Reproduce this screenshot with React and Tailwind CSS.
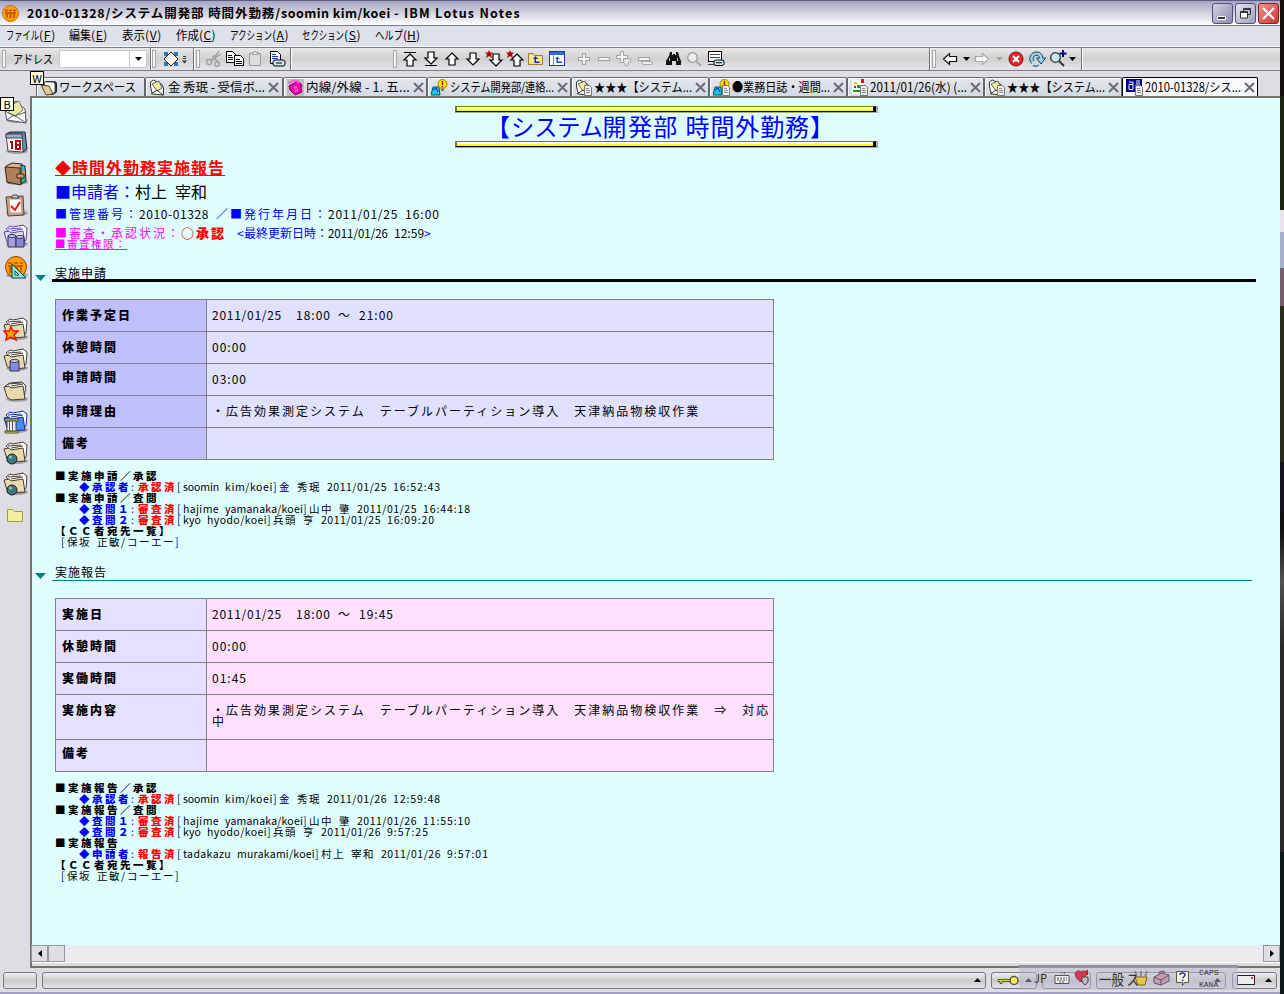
import React, { useLayoutEffect, useRef } from 'react';

const CJK = /[\u2190-\u9fff\uff00-\uffef]+/g;

/* Makes its text exactly w wide: condenses text that is too long, spaces out text that is too short. */
function Fit({ w, children, className = '' }) {
  const ref = useRef(null);
  useLayoutEffect(() => {
    const el = ref.current;
    el.style.letterSpacing = '0px';
    el.style.transform = 'none';
    el.style.marginRight = '0px';
    const nat = el.getBoundingClientRect().width;
    const n = Array.from(el.textContent).length;
    const gap = (w - nat) / n;
    if (gap < -0.25) {
      el.style.transform = `scaleX(${w / nat})`;
      el.style.marginRight = w - nat + 'px';
    } else {
      el.style.letterSpacing = gap + 'px';
    }
  }, [w, children]);
  return <span ref={ref} className={'inline-block shrink-0 origin-left whitespace-pre ' + className}>{children}</span>;
}

/* Fixed-pitch text: class of the full-width characters, class of the half-width ones, half-width pitch. */
const PITCH = {
  p17: ['text-[16px] tracking-[1px]', 'text-[15px]', 8.5],
  p16: ['text-[16px]', 'text-[15px]', 8],
  p15: ['text-[13px] tracking-[2px]', 'text-[13px]', 7.5],
  p14: ['text-[12px] tracking-[2px]', 'text-[12px]', 7],
  p13: ['text-[12px] tracking-[1px]', 'text-[12px]', 6.5],
  p12: ['text-[12px]', 'text-[12px]', 6],
  s13: ['text-[10.5px] tracking-[2.5px]', 'text-[10px]', 6.5],
  s12: ['text-[10.5px] tracking-[1.5px]', 'text-[10.5px]', 6],
};

function Mono({ p, children, className = '' }) {
  const [wide, half, pitch] = PITCH[p];
  const parts = [];
  let last = 0;
  const addHalf = (s) => s.split(/(\s+)/).filter(Boolean).forEach((t) => parts.push([true, t]));
  for (const m of children.matchAll(CJK)) {
    if (m.index > last) addHalf(children.slice(last, m.index));
    parts.push([false, m[0]]);
    last = m.index + m[0].length;
  }
  if (last < children.length) addHalf(children.slice(last));
  return (
    <span className={'whitespace-pre ' + wide + ' ' + className}>
      {parts.map(([isHalf, t], i) => (isHalf
        ? <Fit key={i} w={t.length * pitch} className={half}>{t}</Fit>
        : <span key={i}>{t}</span>))}
    </span>
  );
}

const Svg = ({ w, h, children, className = '' }) => (
  <svg width={w} height={h} viewBox={`0 0 ${w} ${h}`} className={'shrink-0 ' + className}>{children}</svg>
);

const Grip = () => <span className="h-[18px] w-[4px] shrink-0 border border-[#a8a8a8] bg-[#f4f4f4]" />;
const Sep = () => <span className="h-full w-[2px] shrink-0 border-l border-[#70707a] bg-white" />;
const Caret = ({ c = '#000' }) => <Svg w={7} h={4}><path d="M0 0h7L3.500 4z" fill={c} /></Svg>;

/* ---------- toolbar icons ---------- */
const UP = 'M8 2l6 6h-3v6H5V8H2z';
const DOWN = 'M8 14l6-6h-3V2H5v6H2z';
const Arrow = ({ d, top, bottom, star }) => (
  <Svg w={18} h={18}>
    <g transform={star ? 'translate(3 2)' : top ? 'translate(1 2)' : bottom ? 'translate(1 0)' : 'translate(1 1)'}>
      <path d={d} fill="#fff" stroke="#000" strokeWidth="1.200" />
    </g>
    {top && <path d="M3 2.500h12" stroke="#000" />}
    {bottom && <path d="M3 15.500h12" stroke="#000" />}
    {star && <path d="M4 0l1 2.500h3L6 4.500 7 8 4 6 1 8l1-3.500L0 2.500h3z" fill="#b00000" />}
  </Svg>
);
const Plus = ({ minus, dbl }) => (
  <Svg w={18} h={18}>
    {dbl && (minus
      ? <path d="M6 11.500h11v3H8z" fill="#eee" stroke="#aaa" />
      : <path d="M12 6v3h4v3h-3v4h-3v-3" fill="#eee" stroke="#aaa" />)}
    {minus
      ? <rect x="3.500" y="7.500" width="11" height="3" fill="#f2f2f2" stroke="#a0a0a0" />
      : <path d="M7.500 3.500h3v4h4v3h-4v4h-3v-4h-4v-3h4z" transform={dbl ? 'translate(-2 -2)' : undefined} fill="#f2f2f2" stroke="#a0a0a0" />}
  </Svg>
);
const Diamond = () => (
  <Svg w={16} h={16}><path d="M1 1h4v4H1zM11 1h4v4h-4zM1 11h4v4H1zM11 11h4v4h-4z" fill="#2878c8" /><path d="M8 1L15 8 8 15 1 8z" fill="#fffbe6" stroke="#222" /></Svg>
);
const Scissors = () => (
  <Svg w={18} h={18}><g fill="none" stroke="#a0a0a0" strokeWidth="1.400"><path d="M14 1L7 11M9 5l-1 2 6 6M16 4L6 10" /><circle cx="4" cy="12" r="2.500" /><circle cx="12" cy="14" r="2.300" /></g></Svg>
);
const Copy = () => (
  <Svg w={18} h={18}><g fill="#fff" stroke="#000"><path d="M.5 1.500h6l3 3v8h-9z" /><path d="M8.500 5.500h6l3 3v7h-9z" /></g><path d="M2 5.500h4M2 7.500h5M2 9.500h5M10 9.500h4M10 11.500h6M10 13.500h6" stroke="#000" /></Svg>
);
const Paste = () => (
  <Svg w={16} h={18}><path d="M2.500 3.500h11v12h-11z" fill="#ddd" stroke="#999" /><path d="M5 4.500v-2h2c0-2 2-2 2 0h2v2z" fill="#eee" stroke="#999" /></Svg>
);
const DocLink = () => (
  <Svg w={18} h={18}><path d="M2.500 1.500h7l3 3v9h-10z" fill="#fff" stroke="#000" /><path d="M4 4.500h4M4 6.500h6M4 8.500h6" stroke="#1040d0" /><rect x="5" y="10" width="12" height="6" rx="2" fill="#cfe4f4" stroke="#000" /><path d="M8 13h6" stroke="#000" /></Svg>
);
const FolderUp = () => (
  <Svg w={18} h={18}><path d="M1.500 3.500h5l1 2h8v9h-14z" fill="#f8e490" stroke="#a08020" /><path d="M6 9l2.500-3L11 9H9v2.500h3.500V13H7.500V9z" fill="#0030c0" /></Svg>
);
const WindowUp = () => (
  <Svg w={18} h={18}><rect x="1.500" y="1.500" width="15" height="14" fill="#fff" stroke="#203890" /><rect x="2" y="2" width="14" height="3" fill="#3070d0" /><path d="M5.500 5v10" stroke="#8090b0" /><path d="M7 9l2.500-2.500L12 9h-2v2.500h4V13H8.500V9z" fill="#1050c0" /></Svg>
);
const Binoculars = () => (
  <Svg w={18} h={18}><path d="M5 2h2v3h1V4h2v1h1V2h2l1 4 2 5v4h-5v-4H7v4H1v-4l3-5z" fill="#111" /><path d="M4.500 8v3M12.500 8v3" stroke="#bbb" /></Svg>
);
const Lens = ({ on }) => (
  <Svg w={18} h={18}>
    <circle cx="6.500" cy="7.500" r="4.800" fill={on ? '#c4f0f4' : '#eee'} stroke={on ? '#333' : '#999'} strokeWidth="1.300" />
    <path d="M10 11l5 5" stroke={on ? '#333' : '#aaa'} strokeWidth="2" />
    {on && <path d="M14 0v7M10.500 3.500h7" stroke="#000090" strokeWidth="2" />}
  </Svg>
);
const FormLink = () => (
  <Svg w={18} h={18}><rect x="1.500" y="1.500" width="13" height="10" fill="#fff" stroke="#000" /><path d="M3 4.500h10M3 7.500h10M1 14.500h6" stroke="#444" /><rect x="7" y="10" width="10" height="5.500" rx="2" fill="#cfe4f4" stroke="#000" /><path d="M9 12.700h6" stroke="#000" /></Svg>
);
const Back = ({ flip, c }) => (
  <Svg w={16} h={16}><path d="M1.500 8l6-5.500v3h7v5h-7v3z" fill="#f8f8f8" stroke={c} strokeWidth="1.200" transform={flip ? 'translate(16 0) scale(-1 1)' : undefined} /></Svg>
);
const Stop = () => (
  <Svg w={16} h={16}><circle cx="8" cy="8" r="7" fill="#e02828" stroke="#801010" /><path d="M5 5l6 6M11 5l-6 6" stroke="#fff" strokeWidth="2.200" /></Svg>
);
const Reload = () => (
  <Svg w={18} h={18}><path d="M3.500 13.500C-.5 8 3 2 8.500 2c4 0 6 2.500 6.200 6H17.500l-4.500 6-4.500-6h3C11 5.500 9.500 5 8 5.200 5 5.800 4.500 9 6 11" fill="#9ad4f0" stroke="#203850" /><path d="M5 15.500q3 1.500 6-.5" fill="none" stroke="#2070b0" strokeWidth="1.500" /></Svg>
);

/* ---------- tab icons ---------- */
const MiniDoc = () => <><path d="M9.500 6.500h5l2 2v8h-7z" fill="#eee" stroke="#777" /><path d="M11 9.500h3M11 11.500h4M11 13.500h4" stroke="#888" /></>;
const TabIcon = ({ k, doc }) => (
  <Svg w={18} h={17}>
    {k === 'folder' && <><path d="M6 2h9l2 2v9l-4 3H8z" fill="#222" /><path d="M4 3h10l1 2v8l-3 2H7z" fill="#fff" stroke="#555" /><path d="M1 6l8 1 4 8-7 1z" fill="#eac98c" stroke="#443" /></>}
    {k === 'mail' && <><path d="M1.500 8V3l3-2 8 4 2 4v7l-11-1z" fill="#fff" stroke="#333" /><path d="M3 5l7-3 3 7-5 3z" fill="#efec9a" stroke="#666" /><path d="M2 15l6-4 6 5" fill="none" stroke="#333" /></>}
    {k === 'phone' && <><rect width="17" height="17" fill="#c0c0c0" /><path d="M2 7l9-5 4 4-1 3 1 4-7 3-5-5z" fill="#f000b0" stroke="#800060" /><path d="M1 4l8-3 3 3M7 9l3-1M8 12l3-1" stroke="#ff60d8" strokeWidth="2" fill="none" /></>}
    {k === 'bulb' && <><path d="M2 8h6l1 8H0z" fill="#18c8e0" stroke="#055" /><path d="M2 11l3-2 2 4" stroke="#0020c0" fill="none" /><circle cx="11.500" cy="5" r="4.500" fill="#ffe800" stroke="#a08000" /><path d="M11.500 2v4M11.500 7v1.500" stroke="#d00" strokeWidth="1.500" /><path d="M10 10h3v2h-3z" fill="#777" /></>}
    {k === 'cal' && <><path d="M1 1h12v14H1z" fill="#fff" /><path d="M3 3h3v2H3z" fill="#f0d000" /><path d="M10 0h3v4h-3zM3 7h2v2H3z" fill="#e01010" /><path d="M2 11h7v2H2zM6 6h3v3H6z" fill="#10a020" /></>}
    {k === 'app' && <><rect width="16" height="13" fill="#000090" /><path d="M3 3h4v2M3 5.500h4v5H3zM11 1v7M13 1v5" stroke="#fff" fill="none" /></>}
    {doc && <MiniDoc />}
  </Svg>
);

const TABS = [
  { w: 109, k: 'folder', t: 'ワークスペース', tw: 77, nox: true },
  { w: 138, k: 'mail', t: '金 秀珉 - 受信ボ...', tw: 97 },
  { w: 144, k: 'phone', t: '内線/外線 - 1. 五...', tw: 104 },
  { w: 144, k: 'bulb', t: 'システム開発部/連絡...', tw: 104 },
  { w: 138, k: 'mail', doc: true, t: '★★★【システム...', tw: 98 },
  { w: 138, k: 'bulb', doc: true, t: '●業務日誌・週間...', tw: 98 },
  { w: 137, k: 'cal', doc: true, t: '2011/01/26(水) (...', tw: 97 },
  { w: 138, k: 'mail', doc: true, t: '★★★【システム...', tw: 98 },
  { w: 136, k: 'app', doc: true, t: '2010-01328/シス...', tw: 96, on: true },
];

const Tab = ({ w, k, doc, t, tw, on, nox }) => (
  <div
    className={'flex h-[19px] shrink-0 items-center rounded-t-[2px] border-t border-l border-r ' + (on ? 'border-black bg-[#f8f8fa]' : 'border-[#66666e] bg-linear-to-b from-[#e4e6ea] to-[#d2dae4] shadow-[inset_1px_1px_0_#fff]')}
    style={{ width: w }}
  >
    <span className="flex w-[22px] shrink-0 pl-[3px]"><TabIcon k={k} doc={doc} /></span>
    <Fit w={tw} className="text-[12.500px] leading-none">{t}</Fit>
    {!nox && <Svg w={11} h={11} className="ml-[3px]"><path d="M1 1l9 9M10 1l-9 9" stroke="#6c6c74" strokeWidth="2" /></Svg>}
  </div>
);

/* ---------- side bar icons ---------- */
const Folders = ({ a = '#ead9ac', s = '#443c30', plain }) => (
  <>
    {!plain && <path d="M3 5l4-3 3 1 10-2 4 3-1 12-4 4z" fill="#fff" stroke={s} />}
    {plain && <path d="M2 7l5-3 12-1 4 4-2 12z" fill="#fff" stroke={s} />}
    <path d="M5 5l13-1M8 7l12-2" stroke={s} />
    <path d="M1 8l5-1 2 2 12-2 2 13-14 1-4-3z" fill={a} stroke={s} />
  </>
);
const SideIcon = ({ k }) => (
  <Svg w={26} h={25}>
    {k !== 'small' && <ellipse cx="14" cy="20" rx="11" ry="3" fill="#a09ea8" />}
    {k === 'mail' && <><path d="M2 11L13 1l9 8 1 14-19-3z" fill="#fff" stroke="#555" /><path d="M6 6l10-5 4 9-8 6-6-3z" fill="#e8eaa0" stroke="#777" /><path d="M2 11l9 5 12-4M4 20l7-5 12 8" fill="none" stroke="#555" /></>}
    {k === 'cal' && <><path d="M3 3l4-2h15l2 17-4 3" fill="#6a88a8" stroke="#223" /><path d="M3 3h16l1 18-15-1z" fill="#fff" stroke="#445" /><path d="M3 3h16v4H3z" fill="#9ab0c8" stroke="#445" /><path d="M9 10v8M7 11h2M13 10h4v8h-4zM13 14h4" fill="none" stroke="#b00000" strokeWidth="2" /></>}
    {k === 'book' && <><path d="M3 4l6-3 10 1v18l-14 1z" fill="#d8b48c" stroke="#3a2818" /><path d="M18 3l4 1 1 15-5 3z" fill="#30b8d0" stroke="#222" /><path d="M19 9h3v4h-3z" fill="#ff9020" /><path d="M19 15h3v4h-3z" fill="#30c020" /><path d="M2 5l15 1 1 17-14-3z" fill="#b08058" stroke="#3a2818" /><path d="M14 12h7v4h-7z" fill="#c89c70" stroke="#3a2818" /></>}
    {k === 'todo' && <><path d="M3 4l17-1 1 19-16 1z" fill="#d8a070" stroke="#443" /><path d="M6 6h12l1 14H7z" fill="#fff" stroke="#a99" /><path d="M8 5l2-3h4l2 3z" fill="#ccc" stroke="#444" /><path d="M8 13l4 4 5-8" stroke="#f01010" strokeWidth="2" fill="none" /></>}
    {k === 'repl' && <><Folders a="#e0d8fa" s="#6040a8" /><path d="M5 12h8v11H5z" fill="#a0a0e0" stroke="#334" /><path d="M13 13h8v10h-8z" fill="#8888d8" stroke="#334" /><ellipse cx="9" cy="12" rx="4" ry="1.500" fill="#ccf" stroke="#334" /><ellipse cx="17" cy="13" rx="4" ry="1.500" fill="#ccf" stroke="#334" /></>}
    {k === 'notes' && <><circle cx="13" cy="12" r="10.500" fill="#ffa000" stroke="#804000" /><path d="M5 7h4v2H5zM11 7h4v2h-4zM17 7h3v2h-3zM5 10h15v2H5zM6 12h3v6H6zM12 12h3v3h-3zM17 12h2v5h-2z" fill="#d06000" /><path d="M9 9v14h14z" fill="#90e8d8" stroke="#044" /><path d="M12 16v4h4z" fill="#fff" stroke="#044" /></>}
    {['fav', 'db', 'fold', 'lib', 'globe'].includes(k) && <Folders a={k === 'lib' ? '#4888f0' : undefined} s={k === 'lib' ? '#103090' : undefined} plain={k === 'fold'} />}
    {k === 'fav' && <path d="M8 10l2 4h5l-4 4 2 5-5-3-5 3 1-5-3-4h5z" fill="#ffa000" stroke="#f01010" strokeWidth="1.500" />}
    {k === 'db' && <><path d="M7 13h9v10H7z" fill="#8888e0" stroke="#334" /><ellipse cx="11.500" cy="13" rx="4.500" ry="1.500" fill="#ccf" stroke="#334" /></>}
    {k === 'lib' && <><path d="M2 9h13v2H2zM2 21h13v2H2z" fill="#fff080" stroke="#443" /><path d="M4 11h9v10H4z" fill="#eee" stroke="#443" /><path d="M6.500 11v10M9.500 11v10" stroke="#555" /></>}
    {k === 'globe' && <><circle cx="9" cy="18" r="5" fill="#407878" stroke="#123" /><circle cx="7.500" cy="16" r="1.500" fill="#a0c8c8" /></>}
    {k === 'small' && <path d="M4.500 6.500h5l2 2h8v10h-15z" fill="#f0f0a0" stroke="#a0a040" />}
  </Svg>
);

const Bevel = () => <div className="h-[7px] w-[423px] shrink-0 border-r-2 border-b border-[#a8a8a8]"><div className="h-[6px] border-t border-r-[3px] border-b border-l-2 border-t-[#808000] border-r-black border-b-black border-l-[#808000] bg-linear-to-b from-white from-25% to-[#ffff00] to-50%" /></div>;

const MENUS = [
  [6, 50, 'ファイル', 'F'], [13, 39, '編集', 'E'], [14, 40, '表示', 'V'], [14, 40, '作成', 'C'],
  [14, 59, 'アクション', 'A'], [13, 59, 'セクション', 'S'], [14, 45, 'ヘルプ', 'H'],
];

function Table({ top, labelBg, valueBg, rows }) {
  return (
    <div className={'ml-[23px] w-[719px] border border-[#808080] ' + top}>
      {rows.map(([h, label, value, pt = 'pt-[8px]'], i) => (
        <div key={i} className={'flex ' + h + (i ? ' border-t border-[#808080]' : '')}>
          <div className={'w-[151px] shrink-0 border-r border-[#808080] pl-[6px] text-[12px] leading-[14px] ' + pt + ' ' + labelBg}>
            <Mono p="p14" className="font-black">{label}</Mono>
          </div>
          <div className={'flex grow flex-col overflow-hidden pt-[8px] pl-[5px] text-[12px] ' + valueBg}>
            {value.map((v, j) => <div key={j} className="h-[11px] leading-[14px]"><Mono p="p14">{v}</Mono></div>)}
          </div>
        </div>
      ))}
    </div>
  );
}

const Log = ({ who, no, done, id, name }) => (
  <div className="flex h-[11px] items-center pl-[47px]">
    <span className="flex w-[52px] shrink-0 text-[#0000ff]"><Mono p="s13" className="font-black">{who}</Mono></span>
    <span className="flex w-[7px] shrink-0 text-[#0000ff]"><Mono p="s12">:</Mono></span>
    <span className="flex w-[39px] shrink-0 text-[#ff0000]"><Mono p="s13" className="font-black">{done}</Mono></span>
    <Mono p="s12" className="text-[#000080]">[</Mono><Mono p="s12">{id}</Mono><Mono p="s12" className="text-[#000080]">]</Mono>
    <Mono p="s12">{name}</Mono>
  </div>
);
const Head = ({ children }) => <div className="flex h-[11px] items-center pl-[23px]"><Mono p="s13" className="font-black">{children}</Mono></div>;
const Cc = () => (
  <>
    <Head>【ＣＣ者宛先一覧】</Head>
    <div className="flex h-[11px] items-center pl-[29px]"><Mono p="s12" className="text-[#000080]">[</Mono><Mono p="s12">保坂 正敏/コーエー</Mono><Mono p="s12" className="text-[#000080]">]</Mono></div>
  </>
);
const Twisty = () => <Svg w={11} h={6}><path d="M0 0h11L5.500 6z" fill="#008080" /></Svg>;

const Panel = ({ w, children }) => (
  <div className="flex h-[17px] shrink-0 items-center justify-end rounded-[3px] border border-[#77777c] bg-linear-to-b from-[#f0f0f0] via-[#c9c9c9] to-[#e4e4f0] px-[4px]" style={{ width: w }}>{children}</div>
);
const UpCaret = () => <Svg w={7} h={4}><path d="M0 4h7L3.500 0z" fill="#000" /></Svg>;

export default function App() {
  return (
    <div className="relative flex h-[994px] w-[1284px] overflow-hidden bg-[#dedee2] font-['Noto_Sans_CJK_JP','Liberation_Sans',sans-serif] text-black">
      <div className="flex w-[1280px] shrink-0 flex-col">
        {/* title bar */}
        <div className="flex h-[26px] shrink-0 items-center border-t border-b border-t-[#5c5c80] border-b-[#78788c] bg-linear-to-b from-[#a6a6c4] via-[#d2d2e0] to-white pl-[2px]">
          <Svg w={17} h={17}><circle cx="8.500" cy="8.500" r="8" fill="#ff9c10" stroke="#d07000" /><path d="M3 5.500h3M7 5.500h3M11 5.500h3M5 8v5M8.500 8v5M12 8v5M3 8h11" stroke="#b85000" strokeWidth="1.500" fill="none" /></Svg>
          <span className="ml-[8px] flex text-[12.500px] leading-none font-bold"><Fit w={84}>2010-01328/</Fit><Fit w={170}>システム開発部 時間外勤務/</Fit><Fit w={113}>soomin kim/koei </Fit><Fit w={127}>- IBM Lotus Notes</Fit></span>
          <div className="grow" />
          <div className="flex gap-[2px] pr-[1px]">
            <span className="flex size-[21px] items-end rounded-[3px] border border-[#50507c] bg-linear-to-br from-[#d4d4e4] to-[#8c8cb0] pb-[3px] pl-[4px]"><span className="h-[4px] w-[9px] border border-white bg-[#333]" /></span>
            <span className="flex size-[21px] items-center justify-center rounded-[3px] border border-[#50507c] bg-linear-to-br from-[#e4e4f0] to-[#a0a0c0]"><Svg w={11} h={11}><path d="M3.500 3V.5h7v6H8M3.500 1.500h7" fill="none" stroke="#333" /><path d="M.5 3.500h7v6.500h-7zM.5 4.500h7" fill="#fff" stroke="#333" /></Svg></span>
            <span className="flex size-[21px] items-center justify-center rounded-[3px] border border-[#882020] bg-linear-to-br from-[#f09090] to-[#c83030]"><Svg w={13} h={13}><path d="M1 1l11 11M12 1L1 12" stroke="#fff" strokeWidth="2" /></Svg></span>
          </div>
        </div>
        {/* menu bar */}
        <div className="flex h-[21px] shrink-0 items-center border-b border-[#f8f8f8] bg-[#dee0ea] pb-[2px] text-[12px] leading-none">
          {MENUS.map(([gap, w, t, k]) => (
            <span key={k} className="flex shrink-0" style={{ marginLeft: gap, width: w }}>
              <Fit w={w - 17}>{t}</Fit><Fit w={17}>({<u>{k}</u>})</Fit>
            </span>
          ))}
        </div>
        {/* tool bar */}
        <div className="flex h-[24px] shrink-0 items-center border-t border-b border-[#7c7c84] bg-linear-to-b from-[#e8e8e8] via-[#d0d0d0] to-[#e6e6ea] pl-[2px]">
          <Grip />
          <Fit w={40} className="ml-[7px] text-[12px] leading-none">アドレス</Fit>
          <div className="ml-[6px] flex h-[18px] w-[88px] shrink-0 border border-[#c8c8cc] bg-white">
            <span className="grow" /><span className="flex w-[17px] items-center justify-center border-l border-[#c8c8cc]"><Caret /></span>
          </div>
          <span className="ml-[3px] flex h-full w-[43px] shrink-0 items-center"><Sep /><Grip /><span className="ml-[7px] flex w-[19px]"><Diamond /></span><Svg w={5} h={9}><path d="M1 1.500h3M1 3.500h3" stroke="#333" /><path d="M0 5.500h5L2.500 8.500z" fill="#333" /></Svg></span>
          <Sep />
          <span className="flex w-[95px] shrink-0 items-center pl-[1px]"><Grip /><span className="flex gap-[3px] pl-[5px]"><Scissors /><Copy /><Paste /><span className="pl-[2px]"><DocLink /></span></span></span>
          <Sep />
          <span className="w-[101px] shrink-0" />
          <Grip />
          <span className="flex w-[174px] shrink-0 gap-[3px] pl-[4px]">
            <Arrow d={UP} top /><Arrow d={DOWN} bottom /><Arrow d={UP} /><Arrow d={DOWN} /><Arrow d={DOWN} star /><Arrow d={UP} star /><FolderUp /><WindowUp />
          </span>
          <span className="flex w-[88px] shrink-0 gap-[2px] pl-[4px]"><Plus /><Plus minus /><Plus dbl /><Plus minus dbl /></span>
          <span className="flex shrink-0 gap-[3px] pl-[6px]"><Binoculars /><Lens /><FormLink /></span>
          <span className="grow" />
          <span className="flex h-full w-[351px] shrink-0 items-center"><Sep />
            <span className="flex pl-[1px]"><Grip /></span>
            <span className="flex items-center pl-[6px]"><Back c="#111" /><span className="w-[5px]" /><Caret /><span className="w-[4px]" /><Back flip c="#a8a8a8" /><span className="w-[6px]" /><Caret c="#aaa890" /><span className="w-[5px]" /><Stop /><span className="w-[4px]" /><Reload /><span className="w-[3px]" /><Lens on /><span className="w-[2px]" /><Caret /></span>
            <span className="ml-[5px] flex h-full"><Sep /></span>
          </span>
        </div>
        {/* body */}
        <div className="flex h-[897px] shrink-0">
          <div className="flex w-[30px] shrink-0 flex-col items-center bg-[#dedde3] pt-[26px]">
            {['mail', 'cal', 'book', 'todo', 'repl', 'notes', '', 'fav', 'db', 'fold', 'lib', 'globe', 'globe', 'small'].map((k, i) => (
              <span key={i} className="flex h-[31px] shrink-0 items-center pl-[2px]">{k && <SideIcon k={k} />}</span>
            ))}
          </div>
          <div className="flex grow flex-col">
            <div className="flex h-[25px] shrink-0 items-end bg-[#dedde3] pl-[6px]">{TABS.map((t, i) => <Tab key={i} {...t} />)}</div>
            <div className="flex h-[849px] shrink-0 flex-col overflow-hidden border-t-2 border-l-2 border-[#74746c] bg-[#dfffff]">
              <div className="flex flex-col pt-[8px] pl-[423px]">
                <Bevel />
                <div className="flex h-[28px] items-center pb-[3px] pl-[31px] text-[24px] leading-none text-[#0000ff]">
                  <Fit w={24.5}>【</Fit><Fit w={92}>システム</Fit><Fit w={83}>開発部 </Fit><Fit w={124.5}>時間外勤務</Fit><Fit w={24}>】</Fit>
                </div>
                <Bevel />
              </div>
              <div className="mt-[10px] flex h-[19px] pl-[23px]"><span className="h-[18px] border-b border-[#ff0000] leading-[18px] text-[#ff0000]"><Mono p="p17" className="font-bold">◆時間外勤務実施報告</Mono></span></div>
              <div className="mt-[4px] flex h-[20px] items-center pl-[23px] leading-none"><Mono p="p16" className="text-[#0000ff]">■申請者：</Mono><Mono p="p16">村上 宰和</Mono></div>
              <div className="mt-[5px] flex h-[16px] items-center pl-[23px] leading-none">
                <Mono p="p14" className="text-[#0000ff]">■管理番号：</Mono><Mono p="p14">2010-01328 </Mono><Mono p="p14" className="text-[#0000ff]">／■発行年月日：</Mono><Mono p="p14">2011/01/25 16:00</Mono>
              </div>
              <div className="mt-[3px] flex h-[15px] items-center pl-[23px] leading-none">
                <Mono p="p14" className="text-[#ff00ff]">■審査・承認状況：</Mono><Mono p="p15" className="font-black text-[#ff0000]">○承認</Mono>
                <span className="w-[11px]" /><Mono p="p14" className="text-[#0000ff]">{'<'}</Mono><Mono p="p12" className="text-[#0000ff]">最終更新日時：</Mono><Mono p="p12">2011/01/26 12:59</Mono><Mono p="p14" className="text-[#0000ff]">{'>'}</Mono>
              </div>
              <div className="flex h-[11px] pl-[23px] text-[10px]"><span className="flex h-[10px] border-b border-[#ff00ff] leading-[7px] text-[#ff00ff]"><Mono p="s12">■審査権限：</Mono></span></div>
              {/* section 1 */}
              <div className="mt-[16px] flex h-[15px] pl-[3px]">
                <span className="flex w-[17px] items-end pb-[1px]"><Twisty /></span>
                <span className="flex w-[1204px] items-center border-b-[3px] border-black pl-[3px] leading-none"><Mono p="p13">実施申請</Mono></span>
              </div>
              <Table top="mt-[17px]" labelBg="bg-[#c0c0ff]" valueBg="bg-[#e0e0ff]" rows={[
                ['h-[31px]', '作業予定日', ['2011/01/25  18:00 ～ 21:00']],
                ['h-[32px]', '休憩時間', ['00:00']],
                ['h-[32px]', '申請時間', ['03:00'], 'pt-[6px]'],
                ['h-[32px]', '申請理由', ['・広告効果測定システム　テーブルパーティション導入　天津納品物検収作業']],
                ['h-[32px]', '備考', []],
              ]} />
              <div className="mt-[11px] flex flex-col leading-none">
                <Head>■実施申請／承認</Head>
                <Log who="◆承認者" done="承認済" id="soomin kim/koei" name="金 秀珉 2011/01/25 16:52:43" />
                <Head>■実施申請／査閲</Head>
                <Log who="◆査閲１" done="審査済" id="hajime yamanaka/koei" name="山中 肇 2011/01/25 16:44:18" />
                <Log who="◆査閲２" done="審査済" id="kyo hyodo/koei" name="兵頭 亨 2011/01/25 16:09:20" />
                <Cc />
              </div>
              {/* section 2 */}
              <div className="mt-[18px] flex h-[15px] pl-[3px]">
                <span className="flex w-[17px] items-end pb-[2px]"><Twisty /></span>
                <span className="flex w-[1200px] items-center border-b border-[#008080] pb-[2px] pl-[3px] leading-none"><Mono p="p13">実施報告</Mono></span>
              </div>
              <Table top="mt-[17px]" labelBg="bg-[#e6e0ff]" valueBg="bg-[#ffe0ff]" rows={[
                ['h-[31px]', '実施日', ['2011/01/25  18:00 ～ 19:45']],
                ['h-[32px]', '休憩時間', ['00:00']],
                ['h-[32px]', '実働時間', ['01:45']],
                ['h-[45px]', '実施内容', ['・広告効果測定システム　テーブルパーティション導入　天津納品物検収作業　⇒　対応', '中']],
                ['h-[32px]', '備考', [], 'pt-[6px]'],
              ]} />
              <div className="mt-[11px] flex flex-col leading-none">
                <Head>■実施報告／承認</Head>
                <Log who="◆承認者" done="承認済" id="soomin kim/koei" name="金 秀珉 2011/01/26 12:59:48" />
                <Head>■実施報告／査閲</Head>
                <Log who="◆査閲１" done="審査済" id="hajime yamanaka/koei" name="山中 肇 2011/01/26 11:55:10" />
                <Log who="◆査閲２" done="審査済" id="kyo hyodo/koei" name="兵頭 亨 2011/01/26 9:57:25" />
                <Head>■実施報告</Head>
                <Log who="◆申請者" done="報告済" id="tadakazu murakami/koei" name="村上 宰和 2011/01/26 9:57:01" />
                <Cc />
              </div>
            </div>
            {/* scroll bar */}
            <div className="flex h-[23px] shrink-0 flex-col border-b-2 border-l-2 border-[#74746c] bg-[#dedee2]">
              <div className="-ml-[1px] flex h-[17px] bg-[#ebebee]">
                <span className="flex w-[17px] items-center justify-center border border-[#96969e] bg-[#dedee4]"><Svg w={4} h={7}><path d="M4 0v7L0 3.500z" /></Svg></span>
                <span className="w-[17px] border border-[#96969e] bg-[#dedee4]" />
                <span className="grow" />
                <span className="flex w-[17px] items-center justify-center border border-[#96969e] bg-[#dedee4]"><Svg w={4} h={7}><path d="M0 0v7l4-3.500z" /></Svg></span>
              </div>
              <span className="h-[1px] bg-white" />
            </div>
          </div>
        </div>
        {/* status bar */}
        <div className="flex h-[26px] shrink-0 items-center border-b-2 border-[#a0a0c4] bg-[#dedee2] pl-[3px]">
          <Panel w={34} /><span className="w-[5px]" /><Panel w={944}><UpCaret /></Panel><span className="w-[5px]" />
          <Panel w={46}><Svg w={22} h={11}><circle cx="17" cy="5.500" r="4" fill="#fff060" stroke="#554" strokeWidth="1.500" /><path d="M13 4.500H1v2h2v2h2v-2h8z" fill="#f0e040" stroke="#554" /></Svg><span className="w-[6px]" /><UpCaret /></Panel><span className="w-[5px]" />
          <Panel w={49}><UpCaret /></Panel><span className="w-[5px]" /><Panel w={130}><UpCaret /></Panel><span className="w-[6px]" />
          <Panel w={45}><Svg w={19} h={11}><rect x=".5" y=".5" width="17" height="9" fill="#eee" stroke="#222" /><rect x="14" y="2" width="2" height="2" fill="#f02060" /></Svg><span className="w-[10px]" /><UpCaret /></Panel>
        </div>
      </div>
      {/* wallpaper behind the window edge */}
      <div className="flex w-[4px] shrink-0 flex-col">
        <span className="h-[96px] bg-[#14100e]" /><span className="h-[114px] bg-[#1e2414]" /><span className="h-[22px] bg-[#e8e4ea]" /><span className="h-[36px] bg-[#a4b0cc]" /><span className="h-[38px] bg-[#74606c]" /><span className="h-[156px] bg-[#282c1c]" /><span className="h-[50px] bg-[#15131c]" /><span className="h-[340px] bg-linear-to-b from-[#101010] from-5% via-[#505254] via-20% to-[#26282a] to-40%" /><span className="grow bg-[#10181c]" />
      </div>
      {/* key tips */}
      <span className="absolute top-[71px] left-[30px] flex h-[14px] w-[14px] items-center justify-center border border-black bg-[#ffffe1] text-[11px] leading-none">W</span>
      <span className="absolute top-[97px] left-0 flex h-[14px] w-[14px] items-center justify-center border border-black bg-[#ffffe1] text-[11px] leading-none">B</span>
      {/* input method bar */}
      <div className="absolute top-[965px] left-[1019px] flex h-[25px] w-[219px] items-center border-t border-[#8c8ca0] bg-[#b8b8cc]/50 pl-[15px] text-[#333]">
        <Fit w={13} className="text-[12px] leading-none">JP</Fit>
        <Svg w={18} h={14} className="ml-[6px]"><path d="M2 4.500h14v8H2z" fill="#eee" stroke="#555" /><path d="M4 7h10M4 9h10M6 11h6M8 1l2 2M12 1l-1 2" stroke="#555" strokeDasharray="2 1" /></Svg>
        <Svg w={18} h={18} className="ml-[2px]"><path d="M2 5q2-5 6-2 4-3 6 2l-6 8q-6-4-6-8z" fill="#d83858" stroke="#903048" /><path d="M9 8h6v5l-3 3-3-3z" fill="#bbb" stroke="#444" /><path d="M14 1v5" stroke="#c02020" strokeWidth="2" /></Svg>
        <Fit w={40} className="ml-[8px] text-[15px] leading-none">一般 ス</Fit>
        <Svg w={16} h={18} className="-ml-[6px]"><path d="M2 8h12l-2 8H5z" fill="#e8c840" stroke="#876020" /><path d="M4 8L2 2M8 8V2M12 8l2-6" stroke="#888" strokeWidth="2" /></Svg>
        <Svg w={18} h={18} className="ml-[4px]"><path d="M1 8l8-4 7 2v6l-8 4-7-2z" fill="#c0a0b0" stroke="#705060" /><path d="M1 8l7 3 8-5M8 11v5M6 5V3l5-1v2" fill="none" stroke="#705060" /></Svg>
        <Svg w={15} h={18} className="ml-[5px]"><path d="M.5 2.500h12v11h-4l-2 3v-3h-6z" fill="#f4f4dc" stroke="#555" /><path d="M4 6q0-2 2.500-2T9 6q0 1-2.500 3M6.500 10.500V12" fill="none" stroke="#2030a0" strokeWidth="1.500" /></Svg>
        <span className="ml-[8px] flex flex-col gap-[3px] font-['Liberation_Mono',monospace] text-[8px] leading-[9px]"><Fit w={20}>CAPS</Fit><Fit w={20}>KANA</Fit></span>
      </div>
    </div>
  );
}
